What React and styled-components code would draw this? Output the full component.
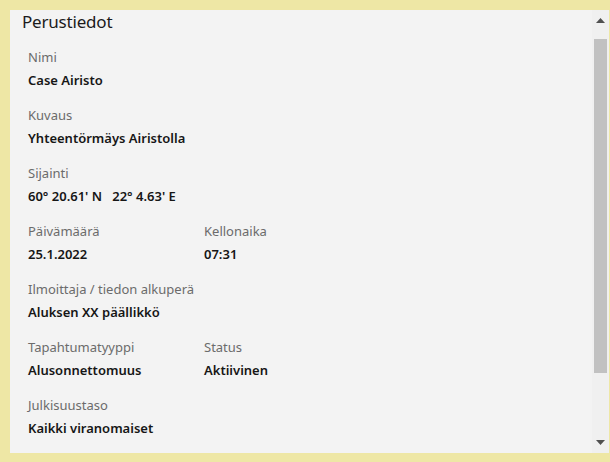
import React from "react";
import styled, { createGlobalStyle } from "styled-components";

const Global = createGlobalStyle`
  html, body { margin: 0; padding: 0; }
  body {
    background: #eee7a5;
    font-family: "Noto Sans", "Open Sans", sans-serif;
    overflow: hidden;
  }
`;

const Frame = styled.div`
  width: 610px;
  height: 462px;
  box-sizing: border-box;
  padding: 10px 1px 9px 10px;
  background: #eee7a5;
`;

const Panel = styled.section`
  height: 100%;
  display: flex;
  background: #f3f3f3;
`;

const Body = styled.div`
  flex: 1;
  min-width: 0;
  overflow: hidden;
  padding-left: 12px;
`;

const ScrollBar = styled.div`
  width: 17px;
  flex: none;
  display: flex;
  flex-direction: column;
  background: #f0f0f0;
`;

const ScrollButton = styled.div`
  height: 29px;
  flex: none;
  display: flex;
  justify-content: center;
  align-items: ${(p) => (p.$down ? "flex-end" : "flex-start")};
  box-sizing: border-box;
  padding: ${(p) => (p.$down ? "0 0 8px" : "8px 0 0")};
`;

const Track = styled.div`
  flex: 1;
  padding: 0 2px;
`;

const Thumb = styled.div`
  height: 334px;
  background: #c1c1c1;
`;

const Arrow = styled.svg`
  width: 9px;
  height: 5px;
  fill: #505050;
  display: block;
`;

const Title = styled.h2`
  margin: 0;
  font-size: 17px;
  letter-spacing: -0.2px;
  font-weight: 400;
  line-height: 24px;
  color: #1b1b1b;
`;

const Fields = styled.div`
  display: grid;
  grid-template-columns: 176px 176px;
  row-gap: 15px;
  padding: 13px 0 0 6px;
`;

const Field = styled.div`
  grid-column: ${(p) => (p.$wide ? "1 / span 2" : "auto")};
  display: flex;
  flex-direction: column;
  gap: 3px;
`;

const Label = styled.div`
  font-size: 13px;
  line-height: 20px;
  color: #6b6b6b;
`;

const Value = styled.div`
  font-size: 13px;
  line-height: 20px;
  font-weight: 600;
  color: #161616;
  white-space: pre;
`;

const rows = [
  { l: "Nimi", v: "Case Airisto", wide: true },
  { l: "Kuvaus", v: "Yhteentörmäys Airistolla", wide: true },
  { l: "Sijainti", v: "60° 20.61' N   22° 4.63' E", wide: true },
  { l: "Päivämäärä", v: "25.1.2022" },
  { l: "Kellonaika", v: "07:31" },
  { l: "Ilmoittaja / tiedon alkuperä", v: "Aluksen XX päällikkö", wide: true },
  { l: "Tapahtumatyyppi", v: "Alusonnettomuus" },
  { l: "Status", v: "Aktiivinen" },
  { l: "Julkisuustaso", v: "Kaikki viranomaiset", wide: true },
];

export default function App() {
  return (
    <>
      <Global />
      <Frame>
        <Panel>
          <Body>
            <Title>Perustiedot</Title>
            <Fields>
              {rows.map((f) => (
                <Field key={f.l} $wide={f.wide}>
                  <Label>{f.l}</Label>
                  <Value>{f.v}</Value>
                </Field>
              ))}
            </Fields>
          </Body>
          <ScrollBar>
            <ScrollButton>
              <Arrow viewBox="0 0 9 5">
                <polygon points="0,5 4.5,0 9,5" />
              </Arrow>
            </ScrollButton>
            <Track>
              <Thumb />
            </Track>
            <ScrollButton $down>
              <Arrow viewBox="0 0 9 5">
                <polygon points="0,0 9,0 4.5,5" />
              </Arrow>
            </ScrollButton>
          </ScrollBar>
        </Panel>
      </Frame>
    </>
  );
}
